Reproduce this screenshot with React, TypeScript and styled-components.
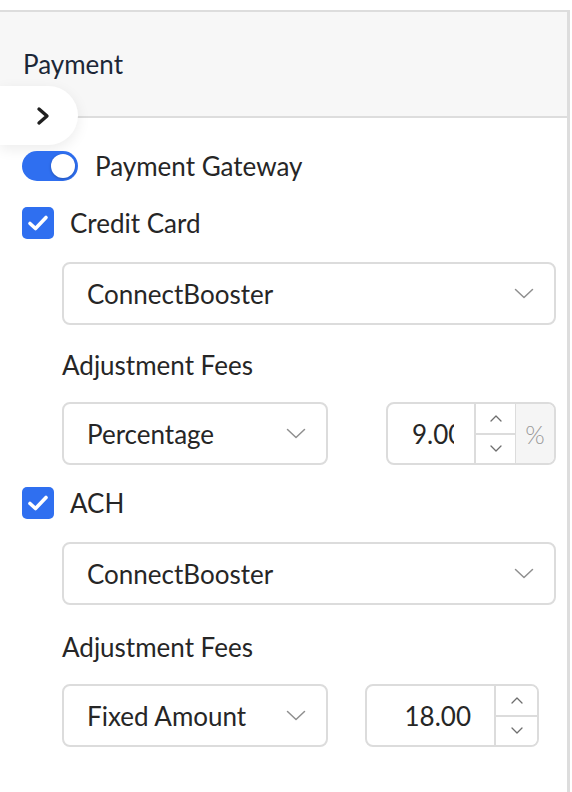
import React from "react";
import styled, { createGlobalStyle } from "styled-components";

const FONT = `"Lato", "Noto Sans", "Liberation Sans", sans-serif`;

const GlobalStyle = createGlobalStyle`
  html, body { margin: 0; padding: 0; background: #ffffff; }
  body { font-family: ${FONT}; -webkit-font-smoothing: antialiased; }
  * { box-sizing: border-box; }
`;

const Page = styled.div`
  width: 572px;
  height: 792px;
  padding-top: 10px;
  background: #ffffff;
  overflow: hidden;
`;

const Panel = styled.section`
  position: relative;
  width: 570px;
  height: 782px;
  border-top: 2px solid #dddddd;
  border-right: 3px solid #dddddd;
  background: #ffffff;
`;

const Header = styled.header`
  height: 106px;
  display: flex;
  align-items: center;
  padding: 0 0 0 23px;
  background: #f7f7f7;
  border-bottom: 2px solid #dddddd;
`;

const Title = styled.h2`
  margin: 0;
  font-size: 26px;
  font-weight: 400;
  color: #1c2737;
`;

const CollapseButton = styled.button`
  position: absolute;
  left: 0;
  top: 74px;
  width: 78px;
  height: 59px;
  border: none;
  padding: 0 0 0 8px;
  border-radius: 0 30px 30px 0;
  background: #ffffff;
  box-shadow: 0 4px 14px rgba(0, 0, 0, 0.08);
  display: flex;
  align-items: center;
  justify-content: center;
  color: #1f1f1f;
`;

const Body = styled.div`
  display: flex;
  flex-direction: column;
  padding: 33px 11px 0 22px;
`;

const SwitchRow = styled.label`
  display: flex;
  align-items: center;
  gap: 17px;
  height: 30px;
  font-size: 26px;
  color: #262626;
`;

const Track = styled.span<{ $on: boolean }>`
  position: relative;
  width: 56px;
  height: 30px;
  border-radius: 15px;
  background: ${(p) => (p.$on ? "#2f6ff0" : "#c4c4c4")};
  flex: none;
`;

const Knob = styled.span<{ $on: boolean }>`
  position: absolute;
  top: 3px;
  left: ${(p) => (p.$on ? "29px" : "3px")};
  width: 24px;
  height: 24px;
  border-radius: 50%;
  background: #ffffff;
  box-shadow: 0 1px 3px rgba(0, 0, 0, 0.25);
`;

const CheckRow = styled.label<{ $top: number }>`
  display: flex;
  align-items: center;
  gap: 16px;
  height: 32px;
  margin-top: ${(p) => p.$top}px;
  font-size: 26px;
  color: #262626;
`;

const Box = styled.span`
  width: 32px;
  height: 32px;
  border-radius: 5px;
  background: #2f6ff0;
  display: flex;
  align-items: center;
  justify-content: center;
  flex: none;
`;

const Indent = styled.div`
  display: flex;
  flex-direction: column;
  padding-left: 40px;
`;

const Select = styled.div<{ $width?: number; $top?: number }>`
  display: flex;
  align-items: center;
  justify-content: space-between;
  width: ${(p) => (p.$width ? `${p.$width}px` : "100%")};
  height: 63px;
  margin-top: ${(p) => p.$top ?? 0}px;
  padding: 0 20px 0 23px;
  border: 2px solid #dcdcdc;
  border-radius: 8px;
  background: #ffffff;
  font-size: 26px;
  color: #262626;
  flex: none;
`;

const FieldLabel = styled.div<{ $top: number }>`
  margin-top: ${(p) => p.$top}px;
  height: 30px;
  line-height: 30px;
  font-size: 26px;
  color: #262626;
`;

const FeeRow = styled.div<{ $gap: number }>`
  display: flex;
  align-items: center;
  gap: ${(p) => p.$gap}px;
  margin-top: 22px;
`;

const NumberBox = styled.div<{ $width: number }>`
  display: flex;
  width: ${(p) => p.$width}px;
  height: 63px;
  border: 2px solid #dcdcdc;
  border-radius: 8px;
  overflow: hidden;
  background: #ffffff;
  flex: none;
`;

const NumberInput = styled.input<{ $align: "left" | "right" }>`
  flex: 1;
  min-width: 0;
  border: none;
  outline: none;
  padding-top: 0;
  padding-bottom: 0;
  padding-left: ${(p) => (p.$align === "left" ? "24px" : "0")};
  padding-right: ${(p) => (p.$align === "left" ? "20px" : "23px")};
  text-align: ${(p) => p.$align};
  font-family: ${FONT};
  font-size: 26px;
  color: #262626;
  background: transparent;
`;

const Spinner = styled.div<{ $width: number }>`
  width: ${(p) => p.$width}px;
  display: flex;
  flex-direction: column;
  border-left: 2px solid #dcdcdc;
  flex: none;
`;

const SpinButton = styled.button<{ $last?: boolean }>`
  flex: 1;
  border: none;
  border-top: ${(p) => (p.$last ? "2px solid #dcdcdc" : "none")};
  padding: 0;
  background: #ffffff;
  display: flex;
  align-items: center;
  justify-content: center;
`;

const Addon = styled.div`
  width: 39px;
  display: flex;
  align-items: center;
  justify-content: center;
  border-left: 1px solid #dcdcdc;
  background: #f5f5f5;
  font-size: 25px;
  font-weight: 300;
  color: #9a9a9a;
  flex: none;
`;

const ChevronRight = () => (
  <svg width="14" height="20" viewBox="0 0 14 20" fill="none">
    <polyline points="3,3 11,10 3,17" stroke="currentColor" strokeWidth="3.4" strokeLinecap="round" strokeLinejoin="round" />
  </svg>
);

const ChevronDown = () => (
  <svg width="20" height="11" viewBox="0 0 20 11" fill="none">
    <polyline points="1.5,1.5 10,9.5 18.5,1.5" stroke="#8f8f8f" strokeWidth="1.5" strokeLinecap="round" strokeLinejoin="round" />
  </svg>
);

const Caret = ({ up }: { up?: boolean }) => (
  <svg width="12" height="7" viewBox="0 0 12 7" fill="none">
    <polyline
      points={up ? "1,6 6,1 11,6" : "1,1 6,6 11,1"}
      stroke="#6e6e6e"
      strokeWidth="1.3"
      strokeLinecap="round"
      strokeLinejoin="round"
    />
  </svg>
);

const Check = () => (
  <svg width="22" height="18" viewBox="0 0 22 18" fill="none">
    <polyline points="3,9.5 8.5,14.5 19,3.5" stroke="#ffffff" strokeWidth="3.6" strokeLinecap="round" strokeLinejoin="round" />
  </svg>
);

const Dropdown = ({ value, width, top }: { value: string; width?: number; top?: number }) => (
  <Select $width={width} $top={top}>
    <span>{value}</span>
    <ChevronDown />
  </Select>
);

const NumberField = ({
  value,
  width,
  spinWidth,
  align,
  addon,
}: {
  value: string;
  width: number;
  spinWidth: number;
  align: "left" | "right";
  addon?: string;
}) => (
  <NumberBox $width={width}>
    <NumberInput $align={align} value={value} readOnly />
    <Spinner $width={spinWidth}>
      <SpinButton aria-label="increase">
        <Caret up />
      </SpinButton>
      <SpinButton $last aria-label="decrease">
        <Caret />
      </SpinButton>
    </Spinner>
    {addon && <Addon>{addon}</Addon>}
  </NumberBox>
);

export default function App() {
  return (
    <Page>
      <GlobalStyle />
      <Panel>
        <Header>
          <Title>Payment</Title>
        </Header>
        <CollapseButton aria-label="expand">
          <ChevronRight />
        </CollapseButton>
        <Body>
          <SwitchRow>
            <Track $on>
              <Knob $on />
            </Track>
            Payment Gateway
          </SwitchRow>

          <CheckRow $top={26}>
            <Box>
              <Check />
            </Box>
            Credit Card
          </CheckRow>
          <Indent>
            <Dropdown value="ConnectBooster" top={23} />
            <FieldLabel $top={25}>Adjustment Fees</FieldLabel>
            <FeeRow $gap={58}>
              <Dropdown value="Percentage" width={266} />
              <NumberField value="9.00" width={170} spinWidth={41} align="left" addon="%" />
            </FeeRow>
          </Indent>

          <CheckRow $top={22}>
            <Box>
              <Check />
            </Box>
            ACH
          </CheckRow>
          <Indent>
            <Dropdown value="ConnectBooster" top={23} />
            <FieldLabel $top={27}>Adjustment Fees</FieldLabel>
            <FeeRow $gap={37}>
              <Dropdown value="Fixed Amount" width={266} />
              <NumberField value="18.00" width={174} spinWidth={43} align="right" />
            </FeeRow>
          </Indent>
        </Body>
      </Panel>
    </Page>
  );
}
